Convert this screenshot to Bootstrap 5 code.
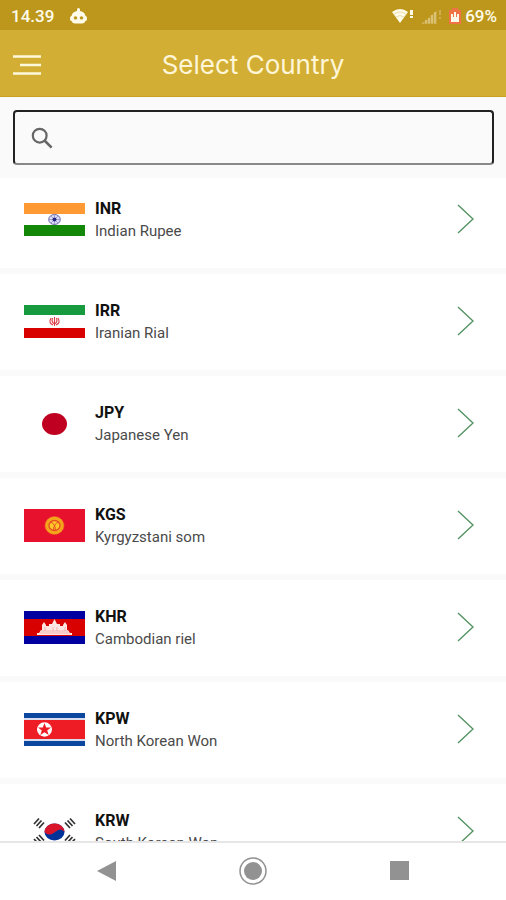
<!DOCTYPE html>
<html lang="en">
<head>
<meta charset="utf-8">
<meta name="viewport" content="width=device-width, initial-scale=1">
<title>Select Country</title>
<link href="https://cdn.jsdelivr.net/npm/bootstrap@5.3.0/dist/css/bootstrap.min.css" rel="stylesheet">
<style>
  body { font-family: Roboto, "Liberation Sans", sans-serif; background: #fafafa; color: #111; }
  svg { display: block; flex-shrink: 0; }
  .status-bar { height: 30px; background: #bc971c; color: #fffbea; font-size: 17px; line-height: 30px; font-weight: 500; padding: 2px 9px 0 11px; }
  .app-bar { height: 67px; background: #d2ae34; border-bottom: 1px solid #c9a31f; display: grid; grid-template-columns: 54px 1fr 54px; align-items: center; }
  .app-title { font-family: Inter, "Open Sans", sans-serif; font-size: 26px; line-height: 32px; font-weight: 400; color: #fff6d8; padding-top: 4px; }
  .search-area { padding: 13px 12px 13px 13px; }
  .search-box { height: 55px; border: 2px solid #222; border-bottom-color: #888; border-radius: 4px; padding: 0 16px; background: #fafafa; }
  .search-box input { font-size: 16px; }
  .search-box:focus-within { border-color: #bc971c; }
  .currency-list { gap: 6px; overflow: hidden; min-height: 0; }
  .currency-row { height: 96px; padding: 27px 32px 0 24px; background: #fff; color: #111; gap: 10px; }
  li:first-child .currency-row { height: 90px; padding-top: 21px; }
  .code { font-size: 16px; line-height: 20px; font-weight: 700; }
  .currency { font-size: 15px; line-height: 24px; color: #4a4a4a; }
  .chevron { margin-top: 5px; }
  .flag { margin-top: 4px; }
  .nav-keys { height: 59px; background: #fff; border-top: 2px solid #e6e6e6; padding: 0 33px 2px; }
</style>
</head>
<body>
<div class="d-flex flex-column vh-100 overflow-hidden">
  <div class="status-bar d-flex align-items-center flex-shrink-0">
    <span>14.39</span>
    <svg class="ms-3" width="17" height="16" viewBox="0 0 17 16" aria-hidden="true"><path fill="#fffbea" fill-rule="evenodd" d="M7 1Q8.500-1 10 1V3Q15 4 15.500 8Q17 8 17 11Q17 13 15.500 13Q14.500 15.500 12 15.500H5Q2.500 15.500 1.500 13Q0 13 0 11Q0 8 1.500 8Q2 4 7 3ZM5.500 8.200a1.700 1.700 0 1 0 .01 0ZM11.500 8.200a1.700 1.700 0 1 0 .01 0Z"/></svg>
    <svg class="ms-auto" width="22" height="15" viewBox="0 0 22 15" aria-hidden="true"><path fill="#fffbea" d="M0 3Q8-3 16 3L8 14Z"/><path d="M2 5Q8 1 14 5M4 8Q8 5 12 8" fill="none" stroke="#bc971c" stroke-opacity=".3"/><path stroke="#fffbea" stroke-width="3" d="M19.500 1V6M19.500 7V9"/></svg>
    <svg class="ms-2" width="19" height="15" viewBox="0 0 19 15" aria-hidden="true"><path fill="#cdae50" d="M0 15L15 1V15Z" fill-opacity=".6"/><path stroke="#dac174" stroke-width="2" d="M1 14.500V13.500M4 14.500V11M7 14.500V9M10 14.500V6M13 14.500V3"/><path stroke="#cdae50" stroke-width="2" d="M18 1V6M18 8V10"/></svg>
    <svg class="ms-2 me-1" width="12" height="16" viewBox="0 0 12 16" aria-hidden="true"><path fill="#ee7345" d="M3 2V0H9V2H12V16H0V2Z"/><path fill="#fffbea" d="M2 6H4V9H5V4H7V9H8V6H10V14H2Z"/></svg>
    <span>69%</span>
  </div>
  <header class="app-bar flex-shrink-0">
    <button type="button" class="btn border-0 p-0 d-flex ps-2 pt-1 ms-1" aria-label="Menu">
      <svg width="29" height="20" viewBox="0 0 29 20" aria-hidden="true"><path d="M1 1.500H29M8 10H29M1 18.500H29" fill="none" stroke="#fff9dc" stroke-width="2.600"/></svg>
    </button>
    <h1 class="app-title text-center mb-0">Select Country</h1>
  </header>
  <form class="search-area flex-shrink-0" role="search">
    <div class="search-box d-flex align-items-center">
      <label for="search" aria-label="Search countries">
        <svg width="22" height="22" viewBox="0 0 24 24" aria-hidden="true"><circle cx="9.500" cy="9.500" r="7.500" fill="none" stroke="#666" stroke-width="2.400"/><path d="M15 15L22.500 22.500" stroke="#666" stroke-width="2.800"/></svg>
      </label>
      <input id="search" type="text" class="form-control border-0 bg-transparent shadow-none">
    </div>
  </form>
  <ul class="currency-list list-unstyled d-flex flex-column flex-grow-1 mb-0">
    <li><a href="#inr" class="currency-row d-flex align-items-start text-decoration-none">
      <svg class="flag" width="61" height="33" viewBox="0 0 61 33" aria-hidden="true"><path fill="#ff9933" d="M0 0H61V11H0Z"/><path fill="#fff" d="M0 11H61V22H0Z"/><path fill="#138808" d="M0 22H61V33H0Z"/><ellipse cx="30.500" cy="16.500" rx="5.800" ry="5" fill="#dcdcf2" stroke="#6666ad"/><path d="M25 16.500H36M30.500 12V21M27 13L34 20M34 13L27 20" stroke="#8080bd" stroke-width=".6"/><circle cx="30.500" cy="16.500" r="2" fill="#252584"/></svg>
      <span class="d-flex flex-column flex-grow-1"><span class="code">INR</span><span class="currency">Indian Rupee</span></span>
      <svg class="chevron" width="17" height="30" viewBox="0 0 17 30" aria-hidden="true"><path d="M1 1L16 15L1 29" fill="none" stroke="#559363" stroke-width="1.400"/></svg>
    </a></li>
    <li><a href="#irr" class="currency-row d-flex align-items-start text-decoration-none">
      <svg class="flag" width="61" height="33" viewBox="0 0 61 33" aria-hidden="true"><path fill="#189b3e" d="M0 0H61V10H0Z"/><path fill="#fff" d="M0 10H61V23H0Z"/><path fill="#d90000" d="M0 23H61V33H0Z"/><path d="M0 10.500H61M0 22.500H61" stroke="#fff" stroke-opacity=".5" stroke-dasharray="1 1"/><path d="M27 13Q24 18 29 20M34 13Q37 18 32 20M28.500 13Q27 17 30.500 19Q34 17 32.500 13M30.500 12V21" fill="none" stroke="#dc3b45" stroke-width="1.100"/></svg>
      <span class="d-flex flex-column flex-grow-1"><span class="code">IRR</span><span class="currency">Iranian Rial</span></span>
      <svg class="chevron" width="17" height="30" viewBox="0 0 17 30" aria-hidden="true"><path d="M1 1L16 15L1 29" fill="none" stroke="#559363" stroke-width="1.400"/></svg>
    </a></li>
    <li><a href="#jpy" class="currency-row d-flex align-items-start text-decoration-none">
      <svg class="flag" width="61" height="33" viewBox="0 0 61 33" aria-hidden="true"><path fill="#fff" d="M0 0H61V33H0Z"/><ellipse cx="30.500" cy="17" rx="12.500" ry="11" fill="#bf0020"/></svg>
      <span class="d-flex flex-column flex-grow-1"><span class="code">JPY</span><span class="currency">Japanese Yen</span></span>
      <svg class="chevron" width="17" height="30" viewBox="0 0 17 30" aria-hidden="true"><path d="M1 1L16 15L1 29" fill="none" stroke="#559363" stroke-width="1.400"/></svg>
    </a></li>
    <li><a href="#kgs" class="currency-row d-flex align-items-start text-decoration-none">
      <svg class="flag" width="61" height="33" viewBox="0 0 61 33" aria-hidden="true"><path fill="#e8112d" d="M0 0H61V33H0Z"/><ellipse cx="30.500" cy="16.500" rx="9.500" ry="9" fill="#f5a51c" stroke="#ee6426" stroke-dasharray="1 1"/><ellipse cx="30.500" cy="16.500" rx="5.500" ry="5" fill="#ffc52a" stroke="#e64f20" stroke-width="1.300"/><path d="M26 13Q31 14 31.500 21M35 13Q30 14 29.500 21" fill="none" stroke="#e64f20"/></svg>
      <span class="d-flex flex-column flex-grow-1"><span class="code">KGS</span><span class="currency">Kyrgyzstani som</span></span>
      <svg class="chevron" width="17" height="30" viewBox="0 0 17 30" aria-hidden="true"><path d="M1 1L16 15L1 29" fill="none" stroke="#559363" stroke-width="1.400"/></svg>
    </a></li>
    <li><a href="#khr" class="currency-row d-flex align-items-start text-decoration-none">
      <svg class="flag" width="61" height="33" viewBox="0 0 61 33" aria-hidden="true"><path fill="#0000a0" d="M0 0H61V33H0Z"/><path fill="#d90000" d="M0 8H61V25H0Z"/><path fill="#ffe6e2" d="M13 24V22H15L17 19H18V14L20 11L22 14V15H25V13H28L29 11L30.500 8L32 11L33 13H36V15H39V14L41 11L43 14V19H44L46 22H48V24Z"/><path d="M17 20H44M16 22H46M21 16V20M29 16V20M33 16V20M41 16V20" stroke="#e89390" stroke-width=".6"/></svg>
      <span class="d-flex flex-column flex-grow-1"><span class="code">KHR</span><span class="currency">Cambodian riel</span></span>
      <svg class="chevron" width="17" height="30" viewBox="0 0 17 30" aria-hidden="true"><path d="M1 1L16 15L1 29" fill="none" stroke="#559363" stroke-width="1.400"/></svg>
    </a></li>
    <li><a href="#kpw" class="currency-row d-flex align-items-start text-decoration-none">
      <svg class="flag" width="61" height="33" viewBox="0 0 61 33" aria-hidden="true"><path fill="#0b469f" d="M0 0H61V33H0Z"/><path fill="#d9dcec" d="M0 5H61V28H0Z"/><path fill="#ee1c25" d="M0 7H61V26H0Z"/><ellipse cx="20.500" cy="16.500" rx="7.500" ry="7.200" fill="#fff"/><path fill="#ee1c25" d="M20.500 10L22.200 14.500H27L23.200 17.400L24.700 22L20.500 19.200L16.300 22L17.800 17.400L14 14.500H18.800Z"/></svg>
      <span class="d-flex flex-column flex-grow-1"><span class="code">KPW</span><span class="currency">North Korean Won</span></span>
      <svg class="chevron" width="17" height="30" viewBox="0 0 17 30" aria-hidden="true"><path d="M1 1L16 15L1 29" fill="none" stroke="#559363" stroke-width="1.400"/></svg>
    </a></li>
    <li><a href="#krw" class="currency-row d-flex align-items-start text-decoration-none">
      <svg class="flag" width="61" height="33" viewBox="0 0 61 33" aria-hidden="true"><path fill="#fff" d="M0 0H61V33H0Z"/><ellipse cx="30.500" cy="17" rx="10" ry="8.500" fill="#003399"/><path fill="#d9152b" d="M20.500 17A10 8.500 0 0 1 40.500 17Q37 12 31 17Q25 22 20.500 17Z"/><path d="M10 9L15 3.500M12.500 11L17.500 5.500M15 13L20 7.500M46 3.500L51 9M43.500 5.500L48.500 11M41 7.500L46 13M10 24L15 29.500M12.500 22L17.500 27.500M15 20L20 25.500M51 24L46 29.500M48.500 22L43.500 27.500M46 20L41 25.500" stroke="#333" stroke-width="1.700"/></svg>
      <span class="d-flex flex-column flex-grow-1"><span class="code">KRW</span><span class="currency">South Korean Won</span></span>
      <svg class="chevron" width="17" height="30" viewBox="0 0 17 30" aria-hidden="true"><path d="M1 1L16 15L1 29" fill="none" stroke="#559363" stroke-width="1.400"/></svg>
    </a></li>
  </ul>
  <nav class="nav-keys d-flex align-items-center flex-shrink-0" aria-label="System">
    <button type="button" class="btn border-0 p-0 col-4 d-flex justify-content-center" aria-label="Back"><svg width="19" height="20" viewBox="0 0 19 20" aria-hidden="true"><path fill="#929292" d="M0 10L19 0V20Z"/></svg></button>
    <button type="button" class="btn border-0 p-0 col-4 d-flex justify-content-center" aria-label="Home"><svg width="28" height="28" viewBox="0 0 28 28" aria-hidden="true"><circle cx="14" cy="14" r="13" fill="none" stroke="#929292" stroke-width="1.500"/><circle cx="14" cy="14" r="9" fill="#929292"/></svg></button>
    <button type="button" class="btn border-0 p-0 col-4 d-flex justify-content-center" aria-label="Recent apps"><svg width="19" height="19" viewBox="0 0 19 19" aria-hidden="true"><path fill="#929292" d="M0 0H19V19H0Z"/></svg></button>
  </nav>
</div>
<script src="https://cdn.jsdelivr.net/npm/bootstrap@5.3.0/dist/js/bootstrap.bundle.min.js"></script>
</body>
</html>
